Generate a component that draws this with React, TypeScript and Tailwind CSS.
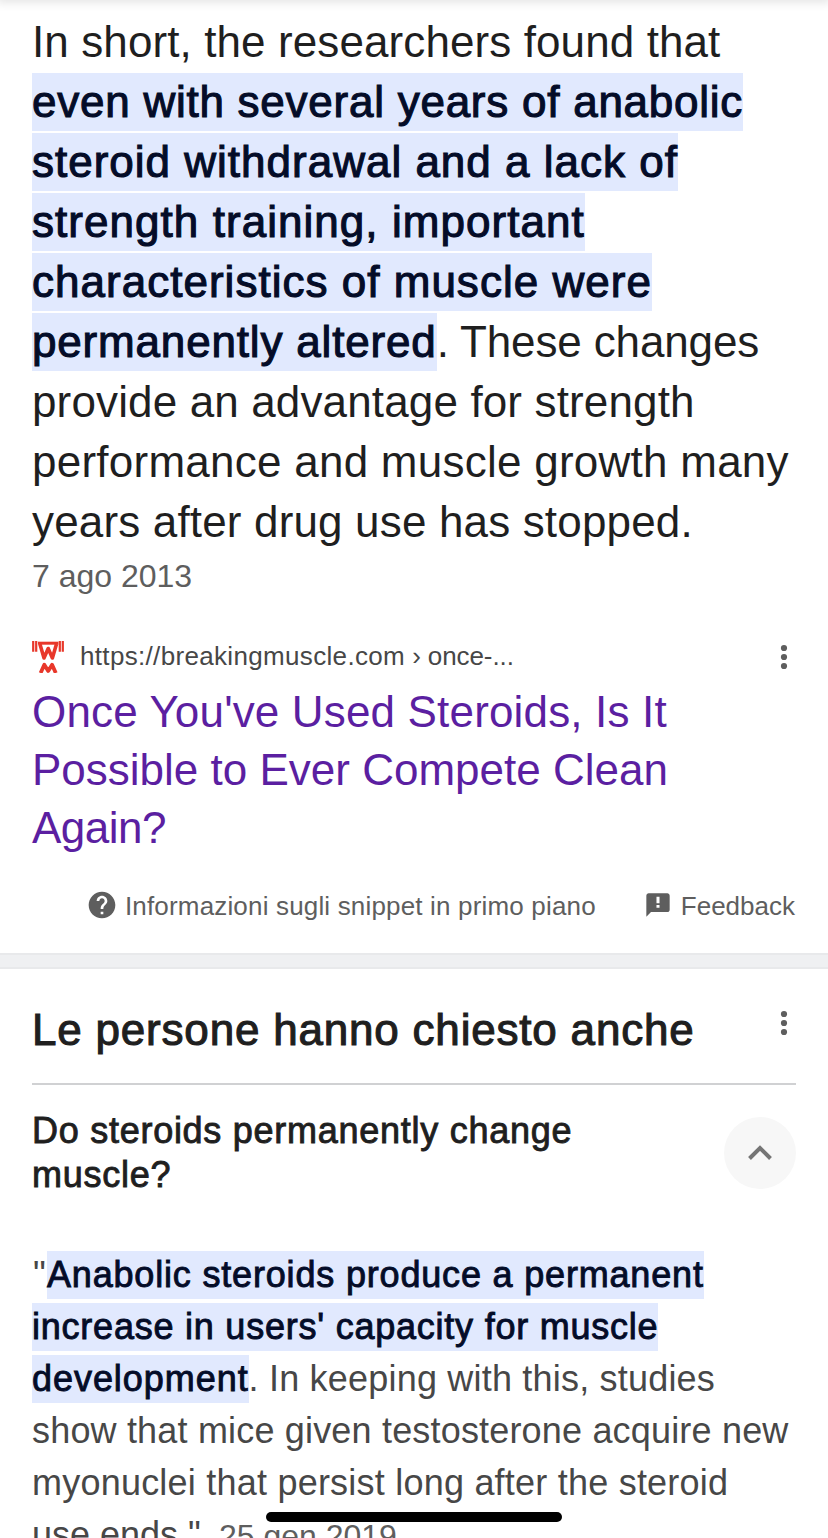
import type { ReactNode } from "react";

function Mark({ children, className, small = false }: { children: ReactNode; className: string; small?: boolean }) {
  return (
    <mark
      className={`bg-[#e1e9fe] text-[#040c28] ${className} ${small
        ? "pt-[3px] pb-[4px] [-webkit-text-stroke:0.9px_#040c28]"
        : "pt-[4px] pb-[5px] [-webkit-text-stroke:1.1px_#040c28]"
        }`}
    >
      {children}
    </mark>
  );
}

function MoreDots() {
  return (
    <svg width="8" height="26" viewBox="0 0 8 26" fill="#5e5e5e">
      <circle cx="4" cy="4" r="3.1" />
      <circle cx="4" cy="13" r="3.1" />
      <circle cx="4" cy="22" r="3.1" />
    </svg>
  );
}

function Favicon() {
  return (
    <svg width="32" height="32" viewBox="0 0 32 32" fill="none" stroke="#e8372a">
      <path d="M1.200 0v10.800M4.200 0v10.800M27.800 0v10.800M30.800 0v10.800" strokeWidth="2.2" />
      <path d="M6 2.200h20.400" strokeWidth="3" />
      <path d="M7.900 3L12 17l4.200-9.500L20.400 17l4.100-14" strokeWidth="3.600" strokeLinejoin="round" />
      <path d="M8.600 32l3.700-8.200 3.900 6.200 3.900-6.200 3.700 8.200" strokeWidth="3.800" strokeLinejoin="round" />
    </svg>
  );
}

export default function App() {
  return (
    <div className="relative h-[1538px] overflow-hidden bg-white font-['Liberation_Sans',sans-serif] whitespace-nowrap text-[#1f1f1f]">
      <div className="absolute inset-x-0 -top-2 h-2 shadow-[0_0_10px_3px_rgba(0,0,0,0.1)]" />

      {/* Featured snippet */}
      <section className="px-8 pt-3">
        <div className="text-[44px] leading-[60px]">
          <p className="tracking-[0.1px]">In short, the researchers found that</p>
          <p><Mark className="tracking-[0.75px]">even with several years of anabolic</Mark></p>
          <p><Mark className="tracking-[1px]">steroid withdrawal and a lack of</Mark></p>
          <p><Mark className="tracking-[1.05px]">strength training, important</Mark></p>
          <p><Mark className="tracking-[1.02px]">characteristics of muscle were</Mark></p>
          <p className="tracking-[-0.14px]"><Mark className="tracking-[0.83px]">permanently altered</Mark>. These changes</p>
          <p className="tracking-[0.14px]">provide an advantage for strength</p>
          <p className="tracking-[0.25px]">performance and muscle growth many</p>
          <p className="tracking-[0.16px]">years after drug use has stopped.</p>
        </div>
        <p className="text-[32px] leading-[48px] text-[#5e5e5e]">7 ago 2013</p>

        <div className="mt-[37px] flex h-10 items-center">
          <Favicon />
          <span className="mb-0.5 ml-4 text-[26px] tracking-[0.33px] text-[#474747]">
            https://breakingmuscle.com<span className="tracking-[-0.1px]"> › once-...</span>
          </span>
          <span className="mr-2 ml-auto"><MoreDots /></span>
        </div>
        <h3 className="mt-[6px] text-[44px] leading-[58px] text-[#5b1fa1]">
          <div className="tracking-[0.16px]">Once You've Used Steroids, Is It</div>
          <div>Possible to Ever Compete Clean</div>
          <div className="tracking-[-0.5px]">Again?</div>
        </h3>

        <div className="mt-[30px] flex h-10 items-center justify-end text-[26px] text-[#5e5e5e]">
          <svg width="32" height="32" viewBox="0 0 24 24" fill="#5e5e5e" className="mr-[7px] mb-1">
            <path d="M12 2C6.480 2 2 6.480 2 12s4.480 10 10 10 10-4.480 10-10S17.520 2 12 2zm1 17h-2v-2h2v2zm2.070-7.750l-.9.920C13.450 12.900 13 13.500 13 15h-2v-.5c0-1.100.45-2.100 1.170-2.830l1.240-1.260c.37-.36.590-.86.590-1.410 0-1.100-.9-2-2-2s-2 .9-2 2H8c0-2.210 1.790-4 4-4s4 1.790 4 4c0 .88-.36 1.680-.93 2.250z" />
          </svg>
          <span className="mb-0.5 tracking-[0.17px]">Informazioni sugli snippet in primo piano</span>
          <svg width="28" height="28" viewBox="0 0 24 24" fill="#5e5e5e" className="mr-[9px] mb-1 ml-12">
            <path d="M20 2H4c-1.100 0-1.990.9-1.990 2L2 22l4-4h14c1.100 0 2-.9 2-2V4c0-1.100-.9-2-2-2zm-6.700 12.300h-2.600v-2.300h2.600v2.300zm0-3.800h-2.600V5h2.600v5.500z" />
          </svg>
          <span className="mr-px mb-0.5">Feedback</span>
        </div>
      </section>

      <div className="mt-[26px] h-4 border-y-2 border-[#e8e9eb] bg-[#eff0f2]" />

      {/* People also ask */}
      <section className="px-8">
        <div className="flex h-[116px] items-start justify-between border-b-2 border-[#d0d1d3] pt-[31px]">
          <h2 className="text-[44px] leading-[60px] tracking-[0.8px] [-webkit-text-stroke:1.1px_#1f1f1f]">
            Le persone hanno chiesto anche
          </h2>
          <span className="mt-[10px] mr-2"><MoreDots /></span>
        </div>

        <div className="mt-6 flex justify-between">
          <h3 className="text-[36px] leading-[44px] tracking-[0.73px] [-webkit-text-stroke:0.9px_#1f1f1f]">
            <div>Do steroids permanently change</div>
            <div>muscle?</div>
          </h3>
          <div className="mt-2 flex size-[72px] items-center justify-center rounded-full bg-[#f7f7f7]">
            <svg width="24" height="16" viewBox="0 0 24 16" fill="none" stroke="#757575" strokeWidth="4">
              <path d="M1.500 13.500L12 3l10.500 10.500" />
            </svg>
          </div>
        </div>

        <div className="mt-[52px] text-[36px] leading-[52px] text-[#474747]">
          <p>
            <span className="pl-px tracking-[1.2px]">"</span>
            <Mark small className="tracking-[0.82px]">Anabolic steroids produce a permanent</Mark>
          </p>
          <p><Mark small className="tracking-[0.77px]">increase in users' capacity for muscle</Mark></p>
          <p className="tracking-[0.2px]">
            <Mark small className="tracking-[0.95px]">development</Mark>. In keeping with this, studies
          </p>
          <p className="tracking-[0.18px]">show that mice given testosterone acquire new</p>
          <p className="tracking-[0.22px]">myonuclei that persist long after the steroid</p>
          <p>use ends." <span className="ml-2 text-[32px] text-[#5e5e5e]">25 gen 2019</span></p>
        </div>
      </section>

      {/* Home indicator */}
      <div className="absolute top-[1512px] left-[266px] h-[10px] w-[296px] rounded-full bg-black" />
    </div>
  );
}
